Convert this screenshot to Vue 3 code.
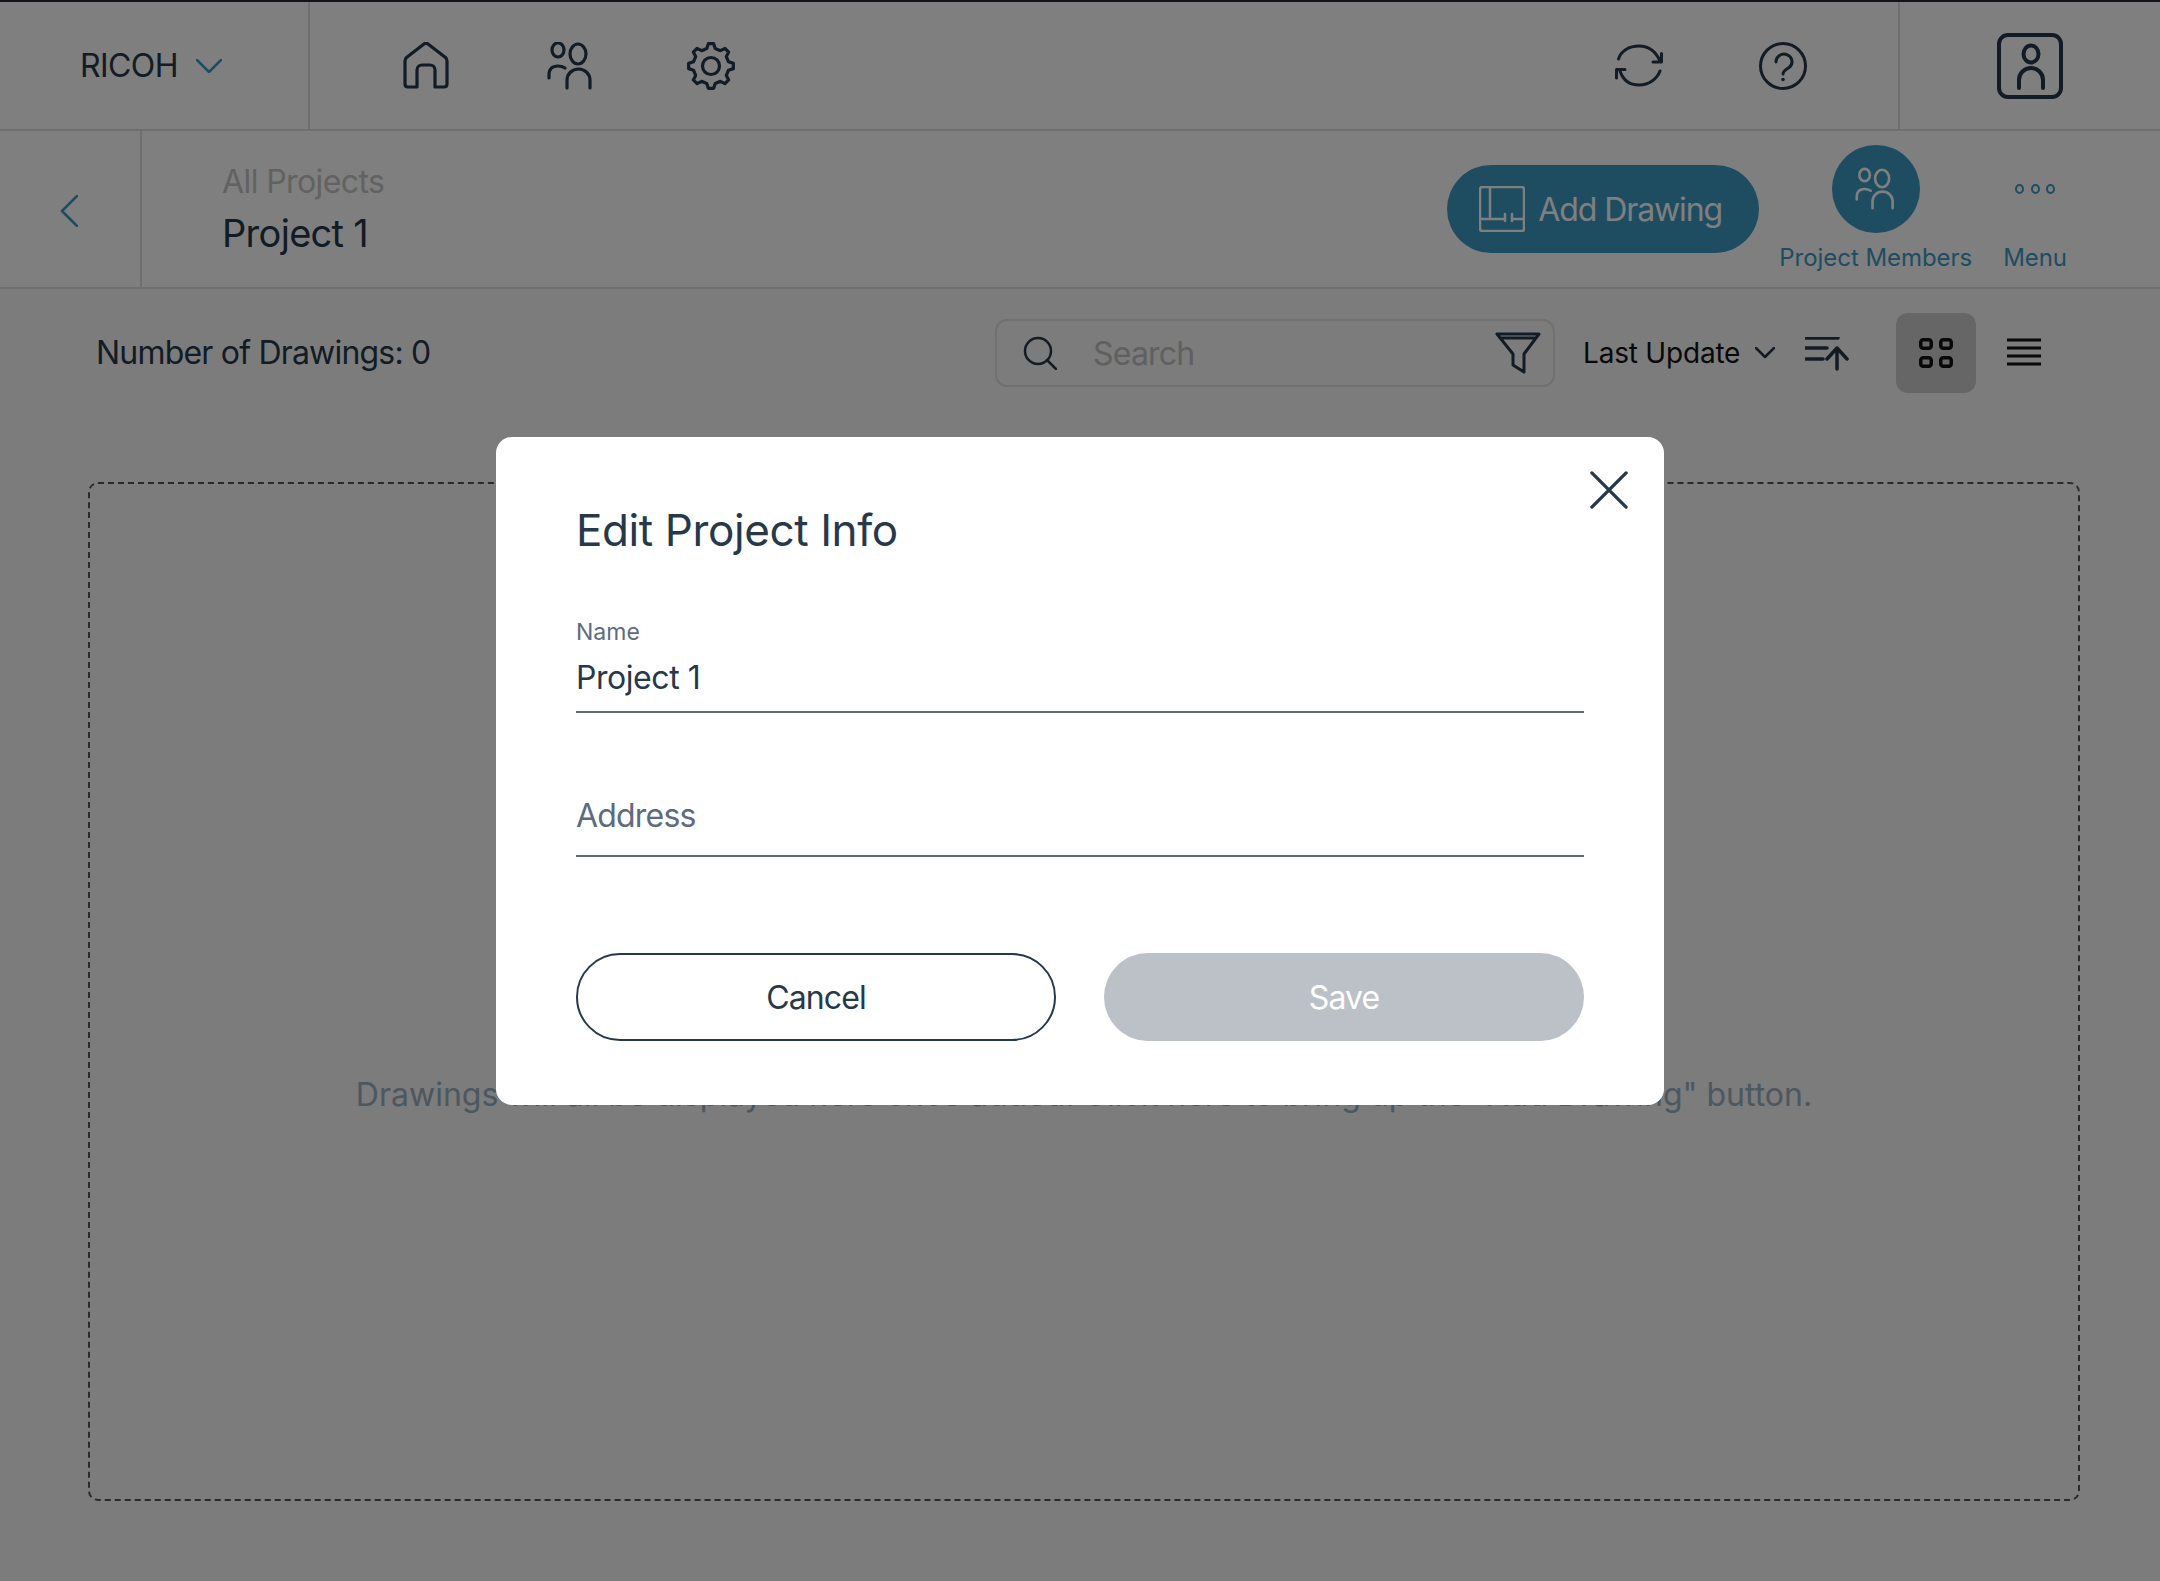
<template>
  <div class="page">
    <header class="topbar">
      <div class="brand">
        <span class="brand__name">RICOH</span>
        <svg class="brand__chev" viewBox="0 0 26 14"><path d="M1 1l12 12L25 1" /></svg>
      </div>
      <nav class="nav">
        <svg class="icon" viewBox="0 0 48 48"><path d="M3 19q0-2 1.500-3.500L22 2q2-1.500 4 0l17.500 13.500q1.500 1.500 1.500 3.500v23q0 3-3 3H33V28a5 5 0 0 0-5-5h-8a5 5 0 0 0-5 5v17H6q-3 0-3-3z" /></svg>
        <svg class="icon nav__people" viewBox="0 0 48 48">
          <ellipse cx="11" cy="8" rx="6" ry="7" />
          <ellipse cx="31" cy="12" rx="8" ry="10" />
          <path d="M2 36v-3q0-9 9-9q4 0 7 2" />
          <path d="M20 46v-8a11.500 11 0 0 1 23 0v8" />
        </svg>
        <svg class="icon" viewBox="0 0 48 48">
          <path :d="gearPath" />
          <circle cx="24" cy="24" r="8.500" />
        </svg>
      </nav>
      <div class="actions">
        <svg class="icon icon--thin" viewBox="0 0 48 48">
          <path d="M3.500 17C6 9 14 4 24 4s17 6 21 15" />
          <path d="M45 29c-3 8-11 14-21 14S8 38 5 29" />
          <path d="M46.500 11.500V20H38M1.500 36V27.500H10" />
        </svg>
        <svg class="icon icon--thin" viewBox="0 0 48 48">
          <circle cx="24" cy="24" r="22.500" />
          <path d="M17 20a8 7.500 0 1 1 13 5.500c-3 2-6 3.500-6 6.500" />
          <circle class="icon__dot" cx="24" cy="37.500" r="1.800" />
        </svg>
      </div>
      <div class="account">
        <svg class="account__icon" viewBox="0 0 66 66">
          <rect x="2" y="2" width="62" height="62" rx="9" />
          <ellipse cx="34" cy="21" rx="7.500" ry="8.500" />
          <path d="M22 55v-8a12 12 0 0 1 24 0v8" />
        </svg>
      </div>
    </header>

    <section class="subbar">
      <button type="button" class="back" aria-label="Back">
        <svg viewBox="0 0 18 32"><path d="M17 1L2 16l15 15" /></svg>
      </button>
      <div class="crumbs">
        <span class="crumbs__parent">All Projects</span>
        <span class="crumbs__current">Project 1</span>
      </div>
      <div class="subbar__tools">
        <button type="button" class="addBtn">
          <svg viewBox="0 0 46 46">
            <rect x="1" y="1" width="44" height="44" rx="2.500" />
            <path d="M11 1v32M1 33h25M26 28v7M33 28v7M33 33h12" />
          </svg>
          <span>Add Drawing</span>
        </button>
        <div class="toolItem toolItem--members">
          <span class="toolItem__circle">
            <svg viewBox="0 0 48 48">
              <ellipse cx="11" cy="8" rx="6" ry="7" />
              <ellipse cx="31" cy="12" rx="8" ry="10" />
              <path d="M2 36v-3q0-9 9-9q4 0 7 2" />
              <path d="M20 46v-8a11.500 11 0 0 1 23 0v8" />
            </svg>
          </span>
          <span class="toolItem__label">Project Members</span>
        </div>
        <div class="toolItem toolItem--menu">
          <span class="toolItem__dots"><i></i><i></i><i></i></span>
          <span class="toolItem__label">Menu</span>
        </div>
      </div>
    </section>

    <main class="content">
      <div class="toolbar">
        <span class="toolbar__count">Number of Drawings: 0</span>
        <div class="search">
          <svg class="search__icon" viewBox="0 0 34 34"><circle cx="15" cy="15" r="13" /><path d="M24 24l9 9" /></svg>
          <span class="search__text">Search</span>
          <svg class="search__filter" viewBox="0 0 46 42"><path d="M2 2h42L29 22v18l-11-7V22zM5 6h36" /></svg>
        </div>
        <span class="sort">Last Update</span>
        <svg class="sort__chev" viewBox="0 0 20 12"><path d="M1 1l9 9 9-9" /></svg>
        <svg class="sort__icon" viewBox="0 0 44 34">
          <path d="M1 1h32M1 11h21M1 22h17M32 32V11M22 22l10-11 10 11" />
        </svg>
        <span class="viewBtn">
          <svg viewBox="0 0 34 30">
            <rect x="1.750" y="1.750" width="10.500" height="8.500" rx="2.500" />
            <rect x="21.750" y="1.750" width="10.500" height="8.500" rx="2.500" />
            <rect x="1.750" y="19.750" width="10.500" height="8.500" rx="2.500" />
            <rect x="21.750" y="19.750" width="10.500" height="8.500" rx="2.500" />
          </svg>
        </span>
        <svg class="listIcon" viewBox="0 0 34 28"><path d="M0 2h34M0 10h34M0 18h34M0 26h34" /></svg>
      </div>
      <div class="dropzone">
        <p class="dropzone__msg">Drawings will all be displayed here once added. Click here to bring up the "Add Drawing" button.</p>
      </div>
    </main>

    <div class="overlay">
      <div class="modal" role="dialog" aria-label="Edit Project Info">
        <svg class="modal__close" viewBox="0 0 40 40"><path d="M2 2l36 36M38 2L2 38" /></svg>
        <h2 class="modal__title">Edit Project Info</h2>
        <div class="field field--name">
          <label class="field__label">Name</label>
          <div class="field__value">Project 1</div>
        </div>
        <div class="field field--address">
          <div class="field__value field__value--empty">Address</div>
        </div>
        <div class="modal__btns">
          <button type="button" class="btn btn--cancel">Cancel</button>
          <button type="button" class="btn btn--save" disabled>Save</button>
        </div>
      </div>
    </div>
  </div>
</template>

<script setup>
// 8 toothed gear outline, centred on 24,24
const teeth = 8
const points = []
for (let i = 0; i < teeth; i++) {
  const a = (i / teeth) * Math.PI * 2 - Math.PI / 2
  const step = (Math.PI * 2) / teeth
  const list = [
    [18, a - step * 0.3],
    [22.5, a - step * 0.15],
    [22.5, a + step * 0.15],
    [18, a + step * 0.3],
  ]
  for (const [r, t] of list) {
    points.push(`${(24 + r * Math.cos(t)).toFixed(2)} ${(24 + r * Math.sin(t)).toFixed(2)}`)
  }
}
const gearPath = 'M' + points.join('L') + 'Z'
</script>

<style>
html,
body {
  margin: 0;
  background: #fff;
}
</style>

<style scoped>
.page {
  position: relative;
  width: 2160px;
  height: 1581px;
  overflow: hidden;
  display: flex;
  flex-direction: column;
  background: #f8f8f8;
  font-family: Inter, "Liberation Sans", sans-serif;
  color: #26384a;
}

svg {
  fill: none;
  stroke: currentColor;
  stroke-width: 3;
  stroke-linecap: round;
  stroke-linejoin: round;
  flex: none;
}

.topbar {
  display: flex;
  height: 131px;
  box-sizing: border-box;
  background: #fff;
  border-top: 2px solid #222831;
  border-bottom: 2px solid #dedede;
}

.brand {
  width: 310px;
  box-sizing: border-box;
  padding-left: 80px;
  display: flex;
  align-items: center;
  gap: 18px;
  border-right: 2px solid #dedede;
}

.brand__name {
  font-size: 32px;
  letter-spacing: -0.6px;
}

.brand__chev {
  width: 26px;
  height: 14px;
  color: #3c9ac4;
  stroke-width: 2.5;
}

.icon {
  width: 48px;
  height: 48px;
  stroke-width: 3.2;
}

.icon--thin {
  stroke-width: 3;
}

.icon__dot {
  fill: currentColor;
  stroke: none;
}

.nav {
  display: flex;
  align-items: center;
  gap: 92px;
  padding-left: 92px;
}

.nav__people {
  margin-left: 5px;
}

.actions {
  margin-left: auto;
  display: flex;
  align-items: center;
  gap: 96px;
  padding-right: 91px;
}

.account {
  width: 262px;
  box-sizing: border-box;
  border-left: 2px solid #dedede;
  display: flex;
  align-items: center;
  padding-left: 97px;
}

.account__icon {
  width: 66px;
  height: 66px;
  stroke-width: 4;
}

.subbar {
  display: flex;
  height: 158px;
  box-sizing: border-box;
  background: #fff;
  border-bottom: 2px solid #dedede;
}

.back {
  width: 142px;
  box-sizing: border-box;
  border: 0;
  border-right: 2px solid #dedede;
  background: transparent;
  padding: 4px 0 0 60px;
  display: flex;
  align-items: center;
  color: #3c9ac4;
}

.back svg {
  width: 18px;
  height: 32px;
  stroke-width: 2.5;
}

.crumbs {
  display: flex;
  flex-direction: column;
  padding: 29px 0 0 80px;
}

.crumbs__parent {
  font-size: 32px;
  line-height: 44px;
  letter-spacing: -0.6px;
  color: #c4c4c4;
}

.crumbs__current {
  margin-top: 2px;
  font-size: 38px;
  line-height: 54px;
  letter-spacing: -0.7px;
}

.subbar__tools {
  margin-left: auto;
  display: flex;
  align-items: flex-start;
  padding-right: 93px;
}

.addBtn {
  margin-top: 34px;
  width: 312px;
  height: 88px;
  box-sizing: border-box;
  border: 0;
  border-radius: 44px;
  padding: 0 0 0 32px;
  display: flex;
  align-items: center;
  gap: 13px;
  background: #3c9ac4;
  color: #fff;
  font-family: inherit;
  font-size: 32px;
  letter-spacing: -1.1px;
}

.addBtn svg {
  width: 46px;
  height: 46px;
  stroke-width: 2.5;
}

.toolItem {
  display: flex;
  flex-direction: column;
  align-items: center;
  color: #3c9ac4;
}

.toolItem--members {
  margin: 14px 0 0 20px;
}

.toolItem--menu {
  margin: 14px 0 0 31px;
}

.toolItem__circle {
  width: 88px;
  height: 88px;
  border-radius: 50%;
  background: #3c9ac4;
  color: #fff;
  display: flex;
  align-items: center;
  justify-content: center;
}

.toolItem__circle svg {
  width: 42px;
  height: 44px;
  stroke-width: 3;
}

.toolItem__dots {
  height: 88px;
  display: flex;
  align-items: center;
  gap: 6.5px;
}

.toolItem__dots i {
  width: 9px;
  height: 10px;
  box-sizing: border-box;
  border: 2px solid #3c9ac4;
  border-radius: 50%;
}

.toolItem__label {
  margin-top: 10px;
  font-size: 24px;
  line-height: 30px;
  letter-spacing: -0.05px;
  white-space: nowrap;
}

.content {
  flex: 1;
  display: flex;
  flex-direction: column;
  padding: 0 80px 80px 88px;
}

.toolbar {
  height: 193px;
  box-sizing: border-box;
  padding: 24px 0 0 8px;
  display: flex;
  align-items: flex-start;
}

.toolbar__count {
  width: 899px;
  margin-top: 8px;
  font-size: 32px;
  line-height: 64px;
  letter-spacing: -0.8px;
}

.search {
  width: 560px;
  height: 68px;
  margin-top: 6px;
  box-sizing: border-box;
  border: 2px solid #e0e0e0;
  border-radius: 12px;
  display: flex;
  align-items: center;
  padding: 0 12px 0 26px;
}

.search__icon {
  width: 34px;
  height: 34px;
  stroke-width: 2.5;
}

.search__text {
  margin-left: 36px;
  font-size: 32px;
  letter-spacing: -0.8px;
  color: #c0c0c0;
}

.search__filter {
  margin-left: auto;
  width: 46px;
  height: 42px;
  stroke-width: 3;
}

.sort {
  margin: 8px 0 0 28px;
  font-size: 28px;
  line-height: 64px;
  letter-spacing: -0.2px;
  color: #111;
}

.sort__chev {
  width: 20px;
  height: 12px;
  margin: 34px 0 0 15px;
  stroke-width: 2.5;
}

.sort__icon {
  width: 44px;
  height: 34px;
  margin: 24px 0 0 30px;
  stroke-width: 3.5;
}

.viewBtn {
  width: 80px;
  height: 80px;
  margin-left: 47px;
  border-radius: 12px;
  background: #ccc;
  color: #111;
  display: flex;
  align-items: center;
  justify-content: center;
}

.viewBtn svg {
  width: 34px;
  height: 30px;
  stroke-width: 3.5;
}

.listIcon {
  width: 34px;
  height: 28px;
  margin: 25px 0 0 31px;
  color: #111;
  stroke-width: 3;
  stroke-linecap: butt;
}

.dropzone {
  flex: 1;
  box-sizing: border-box;
  border: 2px dashed #555;
  border-radius: 10px;
  display: flex;
  justify-content: center;
  padding-top: 589px;
}

.dropzone__msg {
  margin: 0;
  font-size: 32px;
  line-height: 44px;
  letter-spacing: 0;
  color: #9aaebe;
  white-space: nowrap;
}

.overlay {
  position: absolute;
  inset: 0;
  background: rgba(0, 0, 0, 0.5);
}

.modal {
  position: absolute;
  left: 496px;
  top: 437px;
  width: 1168px;
  height: 668px;
  box-sizing: border-box;
  padding: 64px 80px 0 80px;
  background: #fff;
  border-radius: 16px;
  display: flex;
  flex-direction: column;
}

.modal__close {
  position: absolute;
  top: 34px;
  right: 36px;
  width: 38px;
  height: 38px;
  stroke-width: 3.5;
}

.modal__title {
  margin: 0;
  font-size: 44px;
  line-height: 58px;
  font-weight: 400;
  letter-spacing: -0.4px;
}

.field {
  border-bottom: 2px solid #5e6a78;
  box-sizing: border-box;
}

.field--name {
  margin-top: 58px;
  height: 96px;
}

.field--address {
  margin-top: 48px;
  height: 96px;
  display: flex;
  align-items: flex-end;
  padding-bottom: 17px;
}

.field__label {
  display: block;
  font-size: 23px;
  line-height: 30px;
  color: #5d6b7e;
}

.field__value {
  margin-top: 9px;
  font-size: 32px;
  line-height: 44px;
  letter-spacing: -0.45px;
}

.field__value--empty {
  letter-spacing: -0.8px;
  color: #5d6b7e;
}

.modal__btns {
  margin-top: 96px;
  display: flex;
  justify-content: space-between;
}

.btn {
  width: 480px;
  height: 88px;
  box-sizing: border-box;
  border-radius: 44px;
  font-family: inherit;
  font-size: 32px;
  letter-spacing: -0.9px;
}

.btn--cancel {
  background: #fff;
  color: #26384a;
  border: 2px solid #26384a;
}

.btn--save {
  background: #bcc1c7;
  color: #fff;
  border: 0;
}
</style>
